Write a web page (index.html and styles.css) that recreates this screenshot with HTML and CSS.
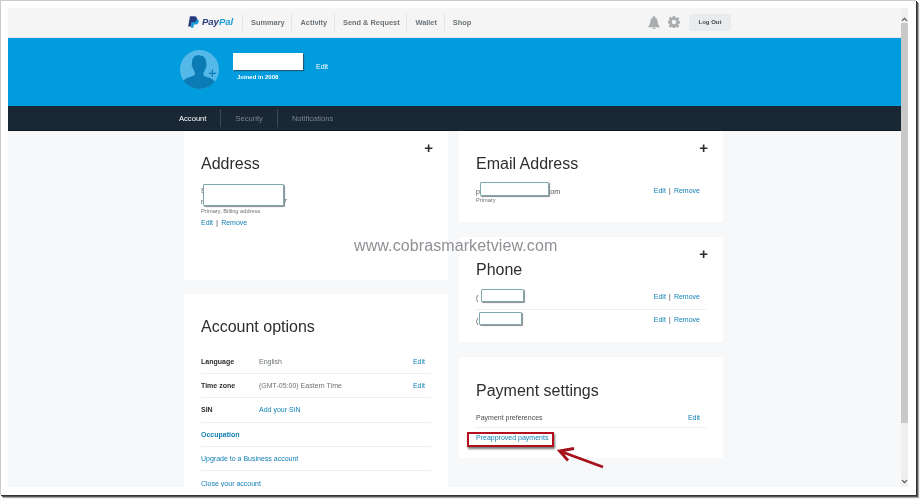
FILE: index.html
```html
<!DOCTYPE html>
<html lang="en">
<head>
<meta charset="utf-8">
<title>PayPal Profile</title>
<link rel="stylesheet" href="styles.css">
</head>
<body>
<div class="frame">
  <div class="window">
    <div class="page">
      <header class="topbar">
        <div class="brand">
          <svg class="pp-mark" viewBox="0 0 12 13" aria-hidden="true"><path fill="#179bd7" d="M4 3.2h5.2c1.9 0 2.8 1.1 2.5 2.9-.4 2.1-1.8 3.2-3.9 3.2H6.500L5.900 12.800H3.200z"/><path fill="#253b80" d="M2.100.2h4.700c2.200 0 3.300 1.200 2.900 3.200-.4 2.300-2 3.500-4.200 3.500H3.900l-.7 4.400H.2z"/></svg>
          <span class="pp-word"><span class="pp-pay">Pay</span><span class="pp-pal">Pal</span></span>
        </div>
        <nav class="mainnav">
          <a class="mainnav-item">Summary</a>
          <a class="mainnav-item">Activity</a>
          <a class="mainnav-item">Send &amp; Request</a>
          <a class="mainnav-item">Wallet</a>
          <a class="mainnav-item">Shop</a>
        </nav>
        <div class="tools">
          <svg class="tool-bell" viewBox="0 0 12 13" aria-hidden="true"><path fill="#a9adb0" d="M6 0c.6 0 1 .4 1 1v.5c1.700.5 2.500 2 2.600 3.800.1 2.200.6 3.700 2.100 5.200v.7H.3v-.7c1.500-1.500 2-3 2.100-5.200C2.500 3.500 3.300 2 5 1.500V1c0-.6.4-1 1-1zM4.500 11.800h3C7.400 12.600 6.800 13 6 13s-1.400-.4-1.500-1.200z"/></svg>
          <svg class="tool-gear" viewBox="0 0 24 24" aria-hidden="true"><path fill="#a9adb0" fill-rule="evenodd" d="M9.800 0h4.400l.6 3.300 1.900.8 2.800-1.900 3.100 3.100-1.900 2.800.8 1.900 3.300.6v4.400l-3.300.6-.8 1.900 1.900 2.800-3.100 3.100-2.800-1.900-1.900.8-.6 3.300H9.800l-.6-3.300-1.900-.8-2.800 1.900-3.100-3.100 1.900-2.800-.8-1.900L-.8 14.200V9.800l3.300-.6.8-1.900L1.400 4.500l3.100-3.100 2.800 1.900 1.900-.8zM12 7.500a4.500 4.500 0 1 0 0 9 4.500 4.500 0 0 0 0-9z"/></svg>
          <a class="logout">Log Out</a>
        </div>
      </header>

      <section class="hero">
        <svg class="avatar" viewBox="0 0 39 39" aria-hidden="true">
          <defs><clipPath id="avatar-clip"><circle cx="19.500" cy="19.500" r="19.500"/></clipPath></defs>
          <circle cx="19.500" cy="19.500" r="19.500" fill="#54b8e9"/>
          <path clip-path="url(#avatar-clip)" fill="#0a7bb4" d="M19.500 5.500c4.200 0 6.700 2.800 6.700 7 0 1.800.6 2.400.2 4-.3 1.100-.9 1.500-1.200 2.500-.4 1.500-.9 2.700-1.700 3.600v2.600c1 1.300 5.500 2.200 8 3.500 2 1 3.300 2.500 3.800 4.300V45H3V32.500c.5-1.800 1.800-3.300 3.800-4.300 2.500-1.300 7-2.200 8-3.500v-2.600c-.8-.9-1.300-2.100-1.700-3.600-.3-1-.9-1.400-1.200-2.500-.4-1.600.2-2.200.2-4 0-4.200 2.500-7 7.400-7z"/>
          <path fill="#0a7bb4" d="M31.800 19.800h1.200v2.900h2.900v1.200h-2.900v2.900h-1.200v-2.900h-2.900v-1.200h2.900z"/>
        </svg>
        <div class="identity">
          <div class="name-row"><span class="name-mask"></span><a class="hero-edit">Edit</a></div>
          <div class="joined">Joined in 2008</div>
        </div>
      </section>

      <nav class="subnav">
        <a class="subnav-item is-active">Account</a>
        <a class="subnav-item">Security</a>
        <a class="subnav-item">Notifications</a>
      </nav>

      <main class="content">
        <div class="column">
          <section class="card card-address">
            <span class="plus">+</span>
            <h2 class="card-title">Address</h2>
            <div class="addr-lines">
              <div class="addr-line">S</div>
              <div class="addr-line addr-last"><span>n</span><span>7</span></div>
            </div>
            <span class="mask mask-address"></span>
            <div class="hint">Primary, Billing address</div>
            <div class="actions actions-left"><a class="link">Edit</a><span class="pipe">|</span><a class="link">Remove</a></div>
          </section>

          <section class="card card-options">
            <h2 class="card-title">Account options</h2>
            <div class="opt-row"><span class="opt-key">Language</span><span class="opt-val">English</span><a class="link opt-end">Edit</a></div>
            <div class="opt-row"><span class="opt-key">Time zone</span><span class="opt-val">(GMT-05:00) Eastern Time</span><a class="link opt-end">Edit</a></div>
            <div class="opt-row"><span class="opt-key">SIN</span><a class="link opt-val">Add your SIN</a></div>
            <div class="opt-row"><a class="link link-strong">Occupation</a></div>
            <div class="opt-row"><a class="link">Upgrade to a Business account</a></div>
            <div class="opt-row opt-last"><a class="link">Close your account</a></div>
          </section>
        </div>

        <div class="column">
          <section class="card card-email">
            <span class="plus">+</span>
            <h2 class="card-title">Email Address</h2>
            <div class="item-row">
              <span class="item-text item-email"><span>p</span><span>com</span></span>
              <div class="actions"><a class="link">Edit</a><span class="pipe">|</span><a class="link">Remove</a></div>
            </div>
            <span class="mask mask-email"></span>
            <div class="hint">Primary</div>
          </section>

          <section class="card card-phone">
            <span class="plus">+</span>
            <h2 class="card-title">Phone</h2>
            <div class="item-row phone-row phone-first">
              <span class="item-text">(</span>
              <div class="actions"><a class="link">Edit</a><span class="pipe">|</span><a class="link">Remove</a></div>
            </div>
            <div class="item-row phone-row phone-second">
              <span class="item-text">(</span>
              <div class="actions"><a class="link">Edit</a><span class="pipe">|</span><a class="link">Remove</a></div>
            </div>
            <span class="mask mask-phone1"></span>
            <span class="mask mask-phone2"></span>
          </section>

          <section class="card card-payment">
            <h2 class="card-title">Payment settings</h2>
            <div class="pay-row"><span class="item-text">Payment preferences</span><a class="link">Edit</a></div>
            <a class="link pay-link">Preapproved payments</a>
            <span class="callout"></span>
            <svg class="arrow" viewBox="0 0 50 24" aria-hidden="true"><path fill="none" stroke="#a5101c" stroke-width="2.800" d="M47 21 3.500 5M18 2.500 3.500 5 12 14.500"/></svg>
          </section>
        </div>
      </main>
      <div class="watermark">www.cobrasmarketview.com</div>
    </div>

    <aside class="scrollbar">
      <svg class="scroll-arrow" viewBox="0 0 7 5" aria-hidden="true"><path fill="none" stroke="#555" stroke-width="1.200" d="M1 3.800 3.500 1.300 6 3.800"/></svg>
      <div class="scroll-thumb"></div>
      <svg class="scroll-arrow" viewBox="0 0 7 5" aria-hidden="true"><path fill="none" stroke="#555" stroke-width="1.200" d="M1 1.200 3.500 3.700 6 1.200"/></svg>
    </aside>
  </div>
</div>
</body>
</html>
```

FILE: styles.css
```css
* { box-sizing: border-box; }

html, body {
  margin: 0;
  width: 920px;
  height: 499px;
  overflow: hidden;
  background: #fff;
}

body {
  font-family: "Liberation Sans", Arial, sans-serif;
  color: #2c2e2f;
}

.frame {
  width: 916px;
  height: 495px;
  padding: 7px 8px 8px 7px;
  background: #fff;
  border-top: 1px solid #cacaca;
  border-left: 1px solid #cacaca;
  box-shadow: 1px 1px 0 #333, 2px 2px 0 #555, 3px 3px 1px #aaa;
}

.window {
  display: flex;
  height: 479px;
}

.page {
  position: relative;
  width: 893px;
  height: 100%;
  overflow: hidden;
  background: #f7f8fa;
  filter: blur(0.4px);
}

/* top bar */
.topbar {
  display: flex;
  align-items: center;
  height: 30px;
  padding-left: 180px;
  background: #f5f5f5;
  border-bottom: 1px solid #e3e5e6;
}

.brand {
  display: flex;
  align-items: center;
  gap: 3px;
  width: 54px;
}

.pp-mark { width: 11px; height: 12px; margin-bottom: 2px; }

.pp-word {
  font-size: 9.500px;
  font-weight: bold;
  font-style: italic;
  margin-bottom: 2px;
}

.pp-pay { color: #253b80; }
.pp-pal { color: #179bd7; }

.mainnav {
  display: flex;
  align-items: center;
  height: 17px;
}

.mainnav-item {
  display: flex;
  align-items: center;
  height: 100%;
  padding: 0 6.800px 0 8px;
  border-left: 1px solid #e4e5e6;
  font-size: 7.400px;
  font-weight: bold;
  color: #6c7378;
}

.tools {
  display: flex;
  align-items: center;
  margin-left: auto;
  margin-right: 170px;
  margin-bottom: 1px;
}

.tool-bell { width: 12px; height: 13px; margin-right: 8px; }
.tool-gear { width: 12px; height: 12px; margin-right: 9px; }

.logout {
  display: flex;
  align-items: center;
  justify-content: center;
  width: 42px;
  height: 17px;
  background: #e8ecef;
  border-radius: 2px;
  font-size: 6px;
  font-weight: bold;
  color: #45494c;
}

/* hero */
.hero {
  display: flex;
  height: 68px;
  padding: 12px 0 0 172px;
  background: #009cde;
}

.avatar { width: 39px; height: 39px; }

.identity {
  margin-left: 14px;
  padding-top: 3px;
}

.name-row {
  display: flex;
  align-items: center;
}

.name-mask {
  width: 70px;
  height: 17px;
  background: #fff;
  box-shadow: 1px 1px 1px #1b5a78;
}

.hero-edit {
  margin: 10px 0 0 13px;
  font-size: 7px;
  color: #fff;
}

.joined {
  margin: 4px 0 0 4px;
  font-size: 6px;
  font-weight: bold;
  color: #fff;
}

/* sub nav */
.subnav {
  display: flex;
  align-items: center;
  height: 25px;
  padding-left: 171px;
  background: #1a2836;
  border-bottom: 1px solid #0f1720;
}

.subnav-item {
  display: flex;
  align-items: center;
  height: 18px;
  padding: 0 14px;
  border-left: 1px solid #3c4853;
  font-size: 7.600px;
  color: #79848f;
}

.subnav-item:first-child {
  padding-left: 0;
  border-left: 0;
}

.subnav-item.is-active { color: #fff; }

/* content */
.content {
  display: flex;
  gap: 11px;
  padding-left: 176px;
}

.column {
  display: flex;
  flex-direction: column;
  width: 264px;
  gap: 15px;
}

.column:first-child { gap: 14px; }

.card {
  position: relative;
  padding-left: 17px;
  padding-right: 17px;
  background: #fff;
}

.card-title {
  margin: 0;
  font-size: 16px;
  font-weight: normal;
  line-height: 18px;
  color: #2c2e2f;
}

.plus {
  position: absolute;
  top: 8px;
  right: 15px;
  font-size: 15px;
  font-weight: bold;
  line-height: 18px;
  color: #2c2e2f;
}

.mask {
  position: absolute;
  background: #fff;
  border: 1px solid #7fa8ae;
  border-radius: 1px;
  box-shadow: 1px 1px 1px #8a8a8a;
}

.link {
  font-size: 7px;
  color: #0f7fb5;
}

.pipe {
  margin: 0 3px;
  font-size: 8px;
  color: #555;
}

.hint {
  font-size: 5.700px;
  line-height: 7px;
  color: #6c7378;
}

.actions {
  display: flex;
  align-items: center;
  line-height: 10px;
  padding-right: 6px;
}

.item-text {
  font-size: 7px;
  color: #4a4d4f;
}

.item-row {
  display: flex;
  align-items: center;
  justify-content: space-between;
}

/* address */
.card-address {
  height: 149px;
  padding-top: 24px;
}

.addr-lines {
  margin-top: 12px;
  height: 22px;
  font-size: 7px;
  line-height: 11px;
  color: #4a4d4f;
}

.addr-last {
  display: flex;
  justify-content: space-between;
  width: 86px;
}

.mask-address {
  left: 19px;
  top: 53px;
  width: 81px;
  height: 22px;
}

.card-address .hint { margin-top: 1px; }

.actions-left {
  margin-top: 3px;
  padding: 0;
}

/* options */
.card-options {
  height: 200px;
  padding-top: 24px;
}

.card-options .card-title { margin-bottom: 13.500px; }

.opt-row {
  display: flex;
  align-items: center;
  height: 24.400px;
  border-bottom: 1px solid #eceeef;
  font-size: 7px;
}

.opt-last { border-bottom: 0; }

.opt-key {
  width: 58px;
  font-weight: bold;
  color: #2c2e2f;
}

.opt-val { color: #6c7378; }
a.opt-val { color: #0f7fb5; }

.opt-end {
  margin-left: auto;
  padding-right: 6px;
}

.link-strong { font-weight: bold; }

/* email */
.card-email {
  height: 91px;
  padding-top: 24px;
}

.card-email .item-row { margin-top: 13px; height: 10px; }

.item-email {
  display: flex;
  justify-content: space-between;
  width: 84px;
}

.mask-email {
  left: 21px;
  top: 51px;
  width: 69px;
  height: 14px;
}

.card-email .hint { margin-top: 1px; }

/* phone */
.card-phone {
  height: 105px;
  padding-top: 24px;
}

.phone-first {
  height: 25px;
  margin-top: 6px;
  border-bottom: 1px solid #eceeef;
}

.phone-second { height: 20px; }

.mask-phone1 { left: 22px; top: 52px; width: 43px; height: 13px; }
.mask-phone2 { left: 20px; top: 75px; width: 43px; height: 13px; }

/* payment */
.card-payment {
  height: 101px;
  padding-top: 25px;
}

.pay-row {
  display: flex;
  align-items: center;
  justify-content: space-between;
  height: 21px;
  margin-top: 7px;
  padding-right: 6px;
  border-bottom: 1px solid #eceeef;
}

.pay-link {
  display: block;
  margin-top: 5px;
  line-height: 10px;
}

.callout {
  position: absolute;
  left: 8px;
  top: 75px;
  width: 87px;
  height: 15px;
  border: 2px solid #b2101f;
  box-shadow: 1px 2px 2px #777;
}

.arrow {
  position: absolute;
  left: 97px;
  top: 89px;
  width: 50px;
  height: 24px;
}

/* watermark */
.watermark {
  position: absolute;
  left: 346px;
  top: 229px;
  font-size: 16px;
  line-height: 18px;
  letter-spacing: 0.100px;
  color: #909096;
}

/* scrollbar */
.scrollbar {
  display: flex;
  flex-direction: column;
  width: 7px;
  background: #efefef;
}

.scroll-arrow {
  flex: none;
  width: 7px;
  height: 5px;
  margin: 9px 0 1px;
}

.scroll-thumb {
  flex: none;
  height: 400px;
  margin-bottom: 56px;
  background: #c8c8c8;
}

.scrollbar .scroll-arrow:last-child { margin: 0; }
```
